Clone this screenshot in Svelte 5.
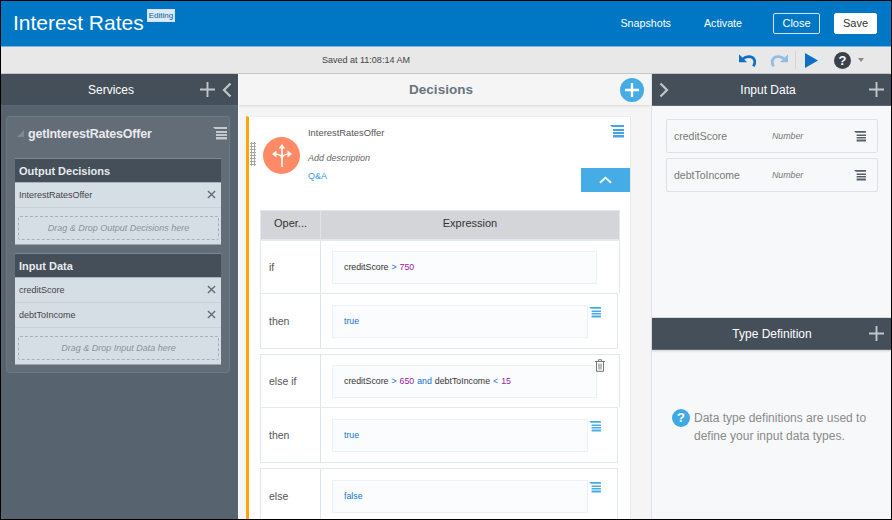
<script>
	const outputs = ['InterestRatesOffer'];
	const inputs = ['creditScore', 'debtToIncome'];
	const dataItems = ['creditScore', 'debtToIncome'];
	const groups = [
		{
			gap: false,
			rows: [
				{ label: 'if', kind: 'cond', tokens: [['creditScore', 'v'], ['>', 'k'], ['750', 'n']] },
				{ label: 'then', kind: 'res', tokens: [['true', 'k']] }
			]
		},
		{
			gap: true,
			rows: [
				{
					label: 'else if',
					kind: 'cond',
					trash: true,
					tokens: [['creditScore', 'v'], ['>', 'k'], ['650', 'n'], ['and', 'k'], ['debtToIncome', 'v'], ['<', 'k'], ['15', 'n']]
				},
				{ label: 'then', kind: 'res', tokens: [['true', 'k']] }
			]
		},
		{
			gap: true,
			rows: [{ label: 'else', kind: 'res', tokens: [['false', 'k']] }]
		}
	];
</script>

{#snippet menu(cls)}
	<svg class="menu {cls}" viewBox="0 0 14 13" fill="currentColor">
		<path d="M0 0h14v2H2zM3 4h11v2H3zM3 7h11v2H3zM3 10h11v2.500H3z" />
	</svg>
{/snippet}

{#snippet plus(cls)}
	<svg class="plus {cls}" viewBox="0 0 16 16" fill="currentColor">
		<path d="M7 0h2v7h7v2H9v7H7V9H0V7h7z" />
	</svg>
{/snippet}

{#snippet chevron(cls, d)}
	<svg class="chev {cls}" viewBox="0 0 10 16" fill="none" stroke="currentColor" stroke-width="2.200">
		<path {d} />
	</svg>
{/snippet}

{#snippet cross()}
	<svg class="cross" viewBox="0 0 10 10" fill="none" stroke="currentColor" stroke-width="1.500">
		<path d="M1 1l8 8M9 1l-8 8" />
	</svg>
{/snippet}

<div class="app">
	<header class="topbar">
		<div class="title-wrap">
			<h1>Interest Rates</h1>
			<span class="badge">Editing</span>
		</div>
		<nav class="actions">
			<span class="link snapshots">Snapshots</span>
			<span class="link activate">Activate</span>
			<button class="btn close">Close</button>
			<button class="btn save">Save</button>
		</nav>
	</header>

	<div class="toolbar">
		<span class="saved">Saved at 11:08:14 AM</span>
		<div class="tools">
			<svg class="undo" viewBox="0 0 20 16" fill="none" stroke="#0f6fc6" stroke-width="3">
				<path d="M4 6.500c4-4 12-4 13.500 2 .4 2-.3 4-1.500 6" />
				<path d="M0 1v9h9z" fill="#0f6fc6" stroke="none" />
			</svg>
			<svg class="redo" viewBox="0 0 20 16" fill="none" stroke="#8fbde4" stroke-width="3">
				<path d="M16 6.500c-4-4-12-4-13.500 2-.4 2 .3 4 1.500 6" />
				<path d="M20 1v9h-9z" fill="#8fbde4" stroke="none" />
			</svg>
			<span class="sep"></span>
			<svg class="play" viewBox="0 0 13 15" fill="#0f6fc6"><path d="M0 0l13 7.500L0 15z" /></svg>
			<span class="help">?</span>
			<span class="caret"></span>
		</div>
	</div>

	<main class="panels">
		<aside class="services">
			<div class="dark-head">
				<span class="head-title">Services</span>
				{@render plus('svc-plus')}
				{@render chevron('svc-chev', 'M8.500 1.500L2 8l6.500 6.500')}
			</div>
			<section class="service">
				<div class="service-head">
					<span class="tri"></span>
					<span class="service-name">getInterestRatesOffer</span>
					{@render menu('svc-menu')}
				</div>

				<div class="box">
					<div class="box-head">Output Decisions</div>
					{#each outputs as item}
						<div class="box-row">{item}{@render cross()}</div>
					{/each}
					<div class="drop">Drag &amp; Drop Output Decisions here</div>
				</div>

				<div class="box">
					<div class="box-head">Input Data</div>
					{#each inputs as item}
						<div class="box-row">{item}{@render cross()}</div>
					{/each}
					<div class="drop">Drag &amp; Drop Input Data here</div>
				</div>
			</section>
		</aside>

		<section class="decisions">
			<div class="dec-head">
				<span class="dec-title">Decisions</span>
				<span class="add-circle">
					<svg viewBox="0 0 14 14" fill="#fff"><path d="M5.800 0h2.400v5.800H14v2.400H8.200V14H5.800V8.200H0V5.800h5.800z" /></svg>
				</span>
			</div>
			<div class="card">
				<div class="card-top">
					<span class="grip"></span>
					<span class="avatar">
						<svg viewBox="0 0 20 23" fill="none" stroke="#fff" stroke-width="1.600">
							<path d="M10 3v20M10 15c0-3-3-5-7-5M10 15c0-3 3-5 7-5" />
							<path d="M6.800 4.500L10 0l3.200 4.500zM4.500 6.500v7L0 10zM15.500 6.500v7L20 10z" fill="#fff" stroke="none" />
						</svg>
					</span>
					<div class="card-info">
						<div class="card-name">InterestRatesOffer</div>
						<div class="card-desc">Add description</div>
						<div class="card-qa">Q&amp;A</div>
					</div>
					{@render menu('card-menu')}
					<span class="collapse">
						<svg viewBox="0 0 14 8" fill="none" stroke="#fff" stroke-width="2"><path d="M1 7l6-5.500L13 7" /></svg>
					</span>
				</div>

				<div class="table">
					<div class="thead">
						<div class="th op">Oper...</div>
						<div class="th">Expression</div>
					</div>
					{#each groups as group}
						<div class="group" class:gap={group.gap}>
							{#each group.rows as row}
								<div class="row {row.kind}">
									<div class="op-cell">{row.label}</div>
									<div class="expr-cell">
										<div class="editor">
											{#each row.tokens as [text, type]}
												<span class={type}>{text}</span>{' '}
											{/each}
										</div>
										{#if row.kind === 'res'}
											{@render menu('row-menu')}
										{/if}
										{#if row.trash}
											<svg class="trash" viewBox="0 0 10 13" fill="none" stroke="#777" stroke-width="1">
												<path d="M0 2.500h10M3.500 2.500V.7h3v1.800M1.500 2.500v9.800h7v-9.800M4 4.500v6M6 4.500v6" />
											</svg>
										{/if}
									</div>
								</div>
							{/each}
						</div>
					{/each}
				</div>
			</div>
		</section>

		<aside class="side">
			<div class="input-data">
				<div class="dark-head">
					{@render chevron('side-chev', 'M1.500 1.500L8 8l-6.500 6.500')}
					<span class="head-title input-title">Input Data</span>
					{@render plus('side-plus')}
				</div>
				<div class="data-list">
					{#each dataItems as item}
						<div class="data-item">
							<span class="data-name">{item}</span>
							<span class="data-type">Number</span>
							{@render menu('data-menu')}
						</div>
					{/each}
				</div>
			</div>
			<div class="type-def">
				<div class="dark-head">
					<span class="head-title type-title">Type Definition</span>
					{@render plus('side-plus')}
				</div>
				<div class="type-body">
					<span class="q">?</span>
					<p>Data type definitions are used to define your input data types.</p>
				</div>
			</div>
		</aside>
	</main>
</div>

<style>
	:global(body) {
		margin: 0;
	}

	.app {
		box-sizing: border-box;
		width: 892px;
		height: 520px;
		border: 1px solid #000;
		display: flex;
		flex-direction: column;
		overflow: hidden;
		font-family: 'Liberation Sans', Arial, sans-serif;
		background: #f5f5f5;
	}

	.topbar {
		height: 46px;
		flex: none;
		display: flex;
		align-items: center;
		justify-content: space-between;
		background: #0077c5;
		border-bottom: 1px solid #7fb4d8;
		box-sizing: border-box;
		color: #fff;
	}

	.title-wrap {
		align-self: flex-start;
		display: flex;
		align-items: flex-start;
		padding-left: 12px;
	}

	h1 {
		margin: 0;
		font-size: 21px;
		font-weight: 400;
		line-height: 24px;
		padding-top: 10px;
	}

	.badge {
		margin: 8px 0 0 3px;
		background: #dcebf6;
		color: #0b5d9c;
		font-size: 8px;
		line-height: 11px;
		padding: 0 1px;
		border: 1px solid #cfe3f2;
	}

	.actions {
		display: flex;
		align-items: center;
		font-size: 10.700px;
		padding: 0 14px 1px 0;
	}

	.snapshots {
		margin-right: 33px;
	}

	.activate {
		margin-right: 31px;
	}

	.btn {
		height: 21px;
		box-sizing: border-box;
		font: inherit;
		font-size: 11px;
		padding: 0;
		border-radius: 2px;
	}

	.close {
		width: 47px;
		background: transparent;
		border: 1px solid #cfe4f3;
		color: #fff;
		margin-right: 14px;
	}

	.save {
		width: 43px;
		background: #fff;
		border: 1px solid #fff;
		color: #333;
	}

	.toolbar {
		height: 27px;
		flex: none;
		box-sizing: border-box;
		background: #e8e8e8;
		border-bottom: 1px solid #c4c6c8;
		display: flex;
		align-items: center;
	}

	.saved {
		font-size: 9px;
		color: #444;
		margin-left: 321px;
	}

	.tools {
		margin-left: auto;
		display: flex;
		align-items: center;
		padding-right: 27px;
	}

	.undo,
	.redo {
		width: 18px;
		height: 15px;
	}

	.redo {
		margin-left: 13px;
	}

	.sep {
		width: 1px;
		height: 18px;
		background: #d4d4d4;
		margin: 0 9px 0 7px;
	}

	.play {
		width: 13px;
		height: 15px;
	}

	.help {
		width: 17px;
		height: 17px;
		border-radius: 50%;
		background: #39424b;
		color: #fff;
		font-size: 13px;
		font-weight: 700;
		line-height: 17px;
		text-align: center;
		margin-left: 16px;
	}

	.caret {
		width: 0;
		height: 0;
		border-left: 3.500px solid transparent;
		border-right: 3.500px solid transparent;
		border-top: 4px solid #8a8a8a;
		margin-left: 7px;
	}

	.panels {
		flex: 1;
		min-height: 0;
		display: grid;
		grid-template-columns: 237px 414px 1fr;
	}

	.dark-head {
		height: 32px;
		box-sizing: border-box;
		background: #444f5a;
		color: #fff;
		display: flex;
		align-items: center;
		position: relative;
		border-bottom: 1px solid #5d6872;
	}

	.head-title {
		font-size: 12px;
		position: absolute;
		left: 0;
		right: 0;
		text-align: center;
		pointer-events: none;
	}

	.input-title {
		right: 7px;
	}

	.type-title {
		left: 1px;
	}

	.plus {
		width: 15px;
		height: 15px;
		color: #c3c6c9;
	}

	.chev {
		width: 10px;
		height: 16px;
		color: #c3c6c9;
	}

	.services {
		background: #57636e;
		min-height: 0;
	}

	.services .head-title {
		left: 0;
		right: 17px;
	}

	.svc-plus {
		margin-left: auto;
	}

	.svc-chev {
		margin: 0 6px 0 7px;
	}

	.service {
		margin: 10px 8px 0 5px;
		border: 1px solid #6d7882;
		border-radius: 3px;
		background: #626d78;
		padding: 0 8px 8px;
	}

	.service-head {
		height: 41px;
		box-sizing: border-box;
		padding-bottom: 8px;
		display: flex;
		align-items: center;
		color: #e8eaec;
	}

	.tri {
		width: 0;
		height: 0;
		border-style: solid;
		border-width: 0 0 7px 7px;
		border-color: transparent transparent #7f8992 transparent;
		margin: 0 4px 0 2px;
	}

	.service-name {
		font-size: 12.500px;
		font-weight: 700;
		letter-spacing: -0.2px;
	}

	.menu {
		width: 14px;
		height: 13px;
		flex: none;
	}

	.svc-menu {
		margin: 0 -6px 0 auto;
		color: #c5c9cd;
	}

	.box {
		background: #d6dee5;
		border-top: 1px solid #7d8791;
		margin-bottom: 9px;
		box-shadow: 0 1px 0 #9aa4ad;
		width: 206px;
		height: 85px;
	}

	.box:last-child {
		margin-bottom: 0;
		height: 110px;
	}

	.box-head {
		height: 24px;
		box-sizing: border-box;
		background: #444f5a;
		color: #e8eaec;
		font-size: 11px;
		font-weight: 700;
		line-height: 25px;
		padding-left: 4px;
		border-bottom: 1px solid #a8b2ba;
	}

	.box-row {
		height: 25px;
		box-sizing: border-box;
		display: flex;
		align-items: center;
		justify-content: space-between;
		padding: 0 5px 1px 4px;
		font-size: 9px;
		color: #444;
		border-bottom: 1px solid #c7d1da;
	}

	.cross {
		width: 9px;
		height: 9px;
		color: #5f6a75;
	}

	.drop {
		margin: 8px 2px 0 3px;
		height: 24px;
		border: 1px dashed #a9b1b8;
		border-radius: 2px;
		box-sizing: border-box;
		font-size: 9px;
		font-style: italic;
		color: #8a9299;
		text-align: center;
		line-height: 22px;
	}

	.decisions {
		background: #f5f5f5;
		min-height: 0;
		overflow: hidden;
		border-right: 1px solid #e2e2e2;
		border-left: 1px solid #fff;
	}

	.dec-head {
		height: 32px;
		box-sizing: border-box;
		display: flex;
		align-items: center;
		justify-content: center;
		position: relative;
		padding-right: 8px;
		border-bottom: 1px solid #e0e0e0;
		box-shadow: 0 1px 2px #e6e6e6;
	}

	.dec-title {
		font-size: 13.500px;
		font-weight: 700;
		color: #6a7480;
	}

	.add-circle {
		position: absolute;
		right: 7px;
		top: 4px;
		width: 24px;
		height: 24px;
		border-radius: 50%;
		background: #46ace6;
		display: flex;
		align-items: center;
		justify-content: center;
	}

	.add-circle svg {
		width: 14px;
		height: 14px;
	}

	.card {
		margin: 10px 20px 0 7px;
		background: #fff;
		border-left: 3px solid #ffa500;
		border-top: 1px solid #eee;
		height: 420px;
		box-sizing: border-box;
		border-right: 1px solid #e8e8e8;
	}

	.card-top {
		height: 93px;
		display: flex;
		position: relative;
	}

	.grip {
		width: 6px;
		height: 24px;
		margin: 25px 0 0 1px;
		flex: none;
		background-image: radial-gradient(circle, #a8a8a8 1px, transparent 1.100px);
		background-size: 3px 3px;
	}

	.avatar {
		width: 37px;
		height: 37px;
		border-radius: 50%;
		background: #ff8a65;
		margin: 20px 0 0 7px;
		flex: none;
		display: flex;
		align-items: center;
		justify-content: center;
	}

	.avatar svg {
		width: 20px;
		height: 23px;
	}

	.card-info {
		margin-left: 8px;
		padding-top: 10px;
	}

	.card-name {
		font-size: 9.400px;
		color: #555;
		line-height: 11px;
	}

	.card-desc {
		font-size: 9px;
		font-style: italic;
		color: #666;
		line-height: 11px;
		margin-top: 15px;
	}

	.card-qa {
		font-size: 9px;
		color: #3a9bdc;
		line-height: 11px;
		margin-top: 7px;
	}

	.card-menu {
		color: #46a4e4;
		margin: 8px 6px 0 auto;
	}

	.collapse {
		position: absolute;
		right: 0;
		bottom: 18px;
		width: 49px;
		height: 24px;
		background: #46ace6;
		display: flex;
		align-items: center;
		justify-content: center;
	}

	.collapse svg {
		width: 13px;
		height: 8px;
	}

	.table {
		margin-left: 11px;
		width: 360px;
	}

	.thead {
		display: grid;
		grid-template-columns: 60px 1fr;
		height: 30px;
		background: #d3d5d8;
		border: 1px solid #e3e8f0;
		box-sizing: border-box;
	}

	.th {
		font-size: 11px;
		color: #333;
		text-align: center;
		line-height: 25px;
	}

	.th.op {
		border-right: 1px solid #dfe4ec;
	}

	.group.gap {
		margin-top: 5px;
	}

	.row {
		display: grid;
		grid-template-columns: 60px 1fr;
		box-sizing: border-box;
		border: 1px solid #e3e8f0;
	}

	.row.cond {
		height: 53px;
		border-bottom: 0;
	}

	.row.res {
		height: 56px;
		width: 358px;
	}

	.group:last-child .row {
		height: 60px;
		border-bottom: 0;
	}

	.op-cell {
		font-size: 10.500px;
		color: #555;
		padding-left: 8px;
		border-right: 1px solid #dfe4ec;
		line-height: 52px;
	}

	.row.res .op-cell {
		line-height: 54px;
	}

	.expr-cell {
		position: relative;
		padding: 10px 0 0 11px;
	}

	.row.res .expr-cell {
		padding-top: 11px;
	}

	.editor {
		box-sizing: border-box;
		height: 33px;
		width: 265px;
		background: #fbfcfe;
		border: 1px solid #edf0f4;
		font-size: 8.800px;
		word-spacing: 0.500px;
		line-height: 31px;
		padding-left: 11px;
		color: #333;
	}

	.row.res .editor {
		width: 256px;
	}

	.v {
		color: #333;
	}

	.k {
		color: #1670d0;
	}

	.n {
		color: #9a1aa0;
	}

	.row-menu {
		position: absolute;
		top: 13px;
		right: 16px;
		width: 12px;
		height: 11px;
		color: #46ace6;
	}

	.trash {
		position: absolute;
		top: 4px;
		right: 14px;
		width: 10px;
		height: 13px;
	}

	.side {
		display: flex;
		flex-direction: column;
		min-height: 0;
		background: #f7f8fa;
	}

	.input-data {
		height: 244px;
		flex: none;
		border-bottom: 1px solid #ddd;
		box-sizing: border-box;
	}

	.side-chev {
		margin-left: 7px;
	}

	.side-plus {
		margin-left: auto;
		margin-right: 7px;
	}

	.data-list {
		padding: 13px 13px 0 14px;
		display: flex;
		flex-direction: column;
		gap: 5px;
	}

	.data-item {
		height: 34px;
		box-sizing: border-box;
		border: 1px solid #dfe1e4;
		border-radius: 2px;
		display: flex;
		align-items: center;
		padding: 0 11px 0 7px;
		background: #f7f8fa;
	}

	.data-name {
		font-size: 10.500px;
		color: #777;
		width: 98px;
	}

	.data-type {
		font-size: 8.800px;
		font-style: italic;
		color: #777;
	}

	.data-menu {
		margin-left: auto;
		width: 12px;
		height: 11px;
		color: #555f69;
	}

	.type-def {
		flex: 1;
	}

	.type-def .dark-head {
		box-shadow: 0 1px 2px #ccc;
	}

	.type-body {
		padding: 59px 20px 0 20px;
		display: flex;
		align-items: flex-start;
	}

	.q {
		width: 18px;
		height: 18px;
		flex: none;
		border-radius: 50%;
		background: #3fa9e6;
		color: #fff;
		font-weight: 700;
		font-size: 13px;
		line-height: 18px;
		text-align: center;
		margin-right: 4px;
	}

	.type-body p {
		margin: 0;
		font-size: 12px;
		line-height: 18px;
		color: #8a8a8a;
	}
</style>
